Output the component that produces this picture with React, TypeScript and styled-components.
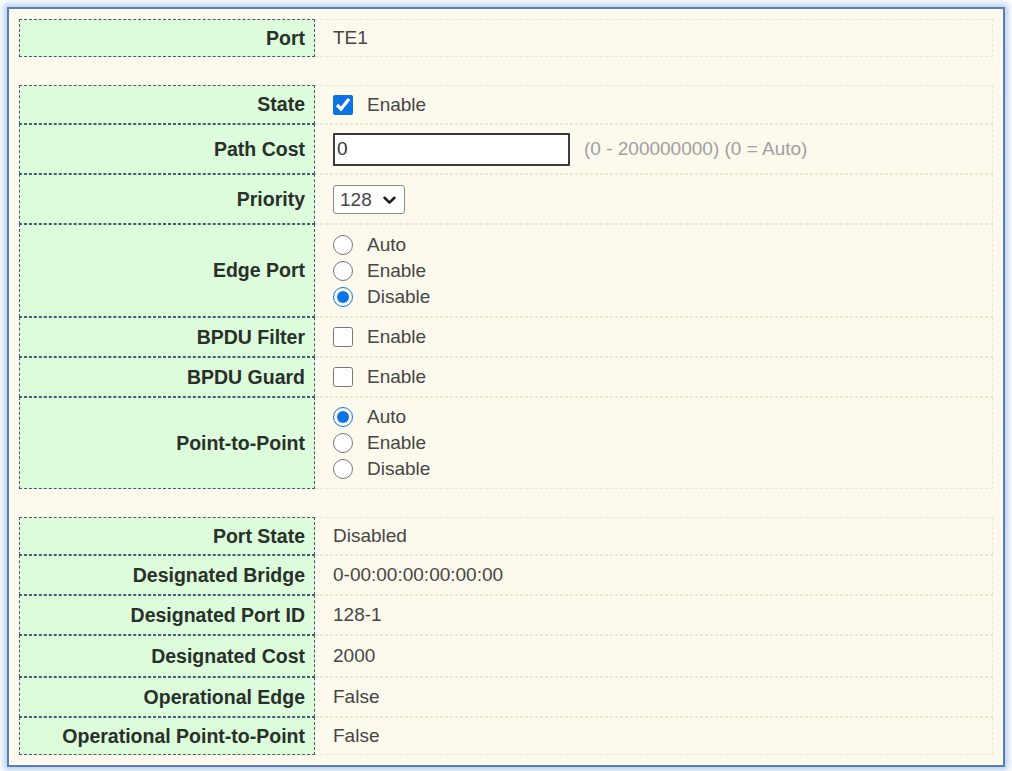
import styled, { createGlobalStyle } from "styled-components";

// page defaults
const GlobalStyle = createGlobalStyle`
  html, body {
    margin: 0;
    padding: 0;
    background: #ffffff;
  }
  body {
    font-family: "Liberation Sans", Arial, sans-serif;
  }
`;

type Line = { label: string; value: string };

const STATUS: Line[] = [
    { label: "Port State", value: "Disabled" },
    { label: "Designated Bridge", value: "0-00:00:00:00:00:00" },
    { label: "Designated Port ID", value: "128-1" },
    { label: "Designated Cost", value: "2000" },
    { label: "Operational Edge", value: "False" },
    { label: "Operational Point-to-Point", value: "False" },
];
const STATUS_HEIGHTS = [38, 40, 40, 42, 40, 38];

const RadioGroup = ({ name, options, checked }: { name: string; options: string[]; checked: string }) => (
    <RadioList>
        {options.map((opt) => (
            <Choice key={opt}>
                <Radio type="radio" name={name} defaultChecked={opt === checked} />
                {opt}
            </Choice>
        ))}
    </RadioList>
);

// STP port settings form
const App = () => {
    return (
        <>
            <GlobalStyle />
            <Page>
                <Frame>
                    <Table>
                        <colgroup>
                            <LabelCol />
                            <col />
                        </colgroup>
                        <tbody>
                            <Row $h={38}>
                                <Label>Port</Label>
                                <Value>TE1</Value>
                            </Row>
                        </tbody>
                    </Table>

                    <Table>
                        <colgroup>
                            <LabelCol />
                            <col />
                        </colgroup>
                        <tbody>
                            <Row $h={39}>
                                <Label>State</Label>
                                <Value>
                                    <Choice>
                                        <Check type="checkbox" defaultChecked />
                                        Enable
                                    </Choice>
                                </Value>
                            </Row>
                            <Row $h={50}>
                                <Label>Path Cost</Label>
                                <Value>
                                    <InputLine>
                                        <TextInput defaultValue="0" />
                                        <Hint>(0 - 200000000) (0 = Auto)</Hint>
                                    </InputLine>
                                </Value>
                            </Row>
                            <Row $h={50}>
                                <Label>Priority</Label>
                                <Value>
                                    <SelectBox>
                                        <Select defaultValue="128">
                                            <option>0</option>
                                            <option>16</option>
                                            <option>32</option>
                                            <option>64</option>
                                            <option>128</option>
                                            <option>240</option>
                                        </Select>
                                        <Chevron viewBox="0 0 12 8">
                                            <path d="M1.5 1.5 L6 6 L10.5 1.5" />
                                        </Chevron>
                                    </SelectBox>
                                </Value>
                            </Row>
                            <Row $h={93}>
                                <Label>Edge Port</Label>
                                <Value>
                                    <RadioGroup name="edge" options={["Auto", "Enable", "Disable"]} checked="Disable" />
                                </Value>
                            </Row>
                            <Row $h={40}>
                                <Label>BPDU Filter</Label>
                                <Value>
                                    <Choice>
                                        <Check type="checkbox" />
                                        Enable
                                    </Choice>
                                </Value>
                            </Row>
                            <Row $h={40}>
                                <Label>BPDU Guard</Label>
                                <Value>
                                    <Choice>
                                        <Check type="checkbox" />
                                        Enable
                                    </Choice>
                                </Value>
                            </Row>
                            <Row $h={92}>
                                <Label>Point-to-Point</Label>
                                <Value>
                                    <RadioGroup name="p2p" options={["Auto", "Enable", "Disable"]} checked="Auto" />
                                </Value>
                            </Row>
                        </tbody>
                    </Table>

                    <Table>
                        <colgroup>
                            <LabelCol />
                            <col />
                        </colgroup>
                        <tbody>
                            {STATUS.map((line, i) => (
                                <Row key={line.label} $h={STATUS_HEIGHTS[i]}>
                                    <Label>{line.label}</Label>
                                    <Value>{line.value}</Value>
                                </Row>
                            ))}
                        </tbody>
                    </Table>
                </Frame>
            </Page>
        </>
    );
};

export default App;

// styles
const Page = styled.div`
    width: 1012px;
    box-sizing: border-box;
    padding: 7px;
`;

const Frame = styled.div`
    width: 998px;
    height: 760px;
    box-sizing: border-box;
    border: 2px solid #5a7fb2;
    box-shadow: 0 0 7px 3px #b2cdee, inset 0 0 0 2px #fffefa;
    background: #fdf9ec;
    padding: 10px;
    display: flex;
    flex-direction: column;
    gap: 28px;
`;

const Table = styled.table`
    width: 100%;
    table-layout: fixed;
    border-collapse: separate;
    border-spacing: 0;
    font-size: 19px;
`;

const LabelCol = styled.col`
    width: 296px;
`;

const Row = styled.tr<{ $h: number }>`
    height: ${(p) => p.$h}px;
`;

const Label = styled.th`
    background: #dcfcdc;
    border: 1px dashed #3e6273;
    text-align: right;
    font-size: 19.5px;
    font-weight: bold;
    color: #29302a;
    padding: 0 9px 0 0;
    white-space: nowrap;
`;

const Value = styled.td`
    border-top: 1px dashed #ece7d3;
    border-bottom: 1px dashed #ece7d3;
    border-right: 1px dashed #ece7d3;
    padding: 0 0 0 18px;
    color: #464646;
`;

const Choice = styled.label`
    display: flex;
    align-items: center;
    gap: 14px;
    height: 26px;
    color: #464646;
`;

const Check = styled.input`
    width: 20px;
    height: 20px;
    margin: 0;
    accent-color: #0b73e6;
`;

const Radio = styled.input`
    width: 20px;
    height: 20px;
    margin: 0;
    accent-color: #0b73e6;
`;

const RadioList = styled.div`
    display: flex;
    flex-direction: column;
`;

const InputLine = styled.div`
    display: flex;
    align-items: center;
    gap: 14px;
`;

const TextInput = styled.input`
    width: 237px;
    height: 33px;
    box-sizing: border-box;
    border: 2px solid #3a3a3a;
    border-radius: 1px;
    padding: 0 2px;
    font: 19px "Liberation Sans", Arial, sans-serif;
    color: #333;
    background: #fff;
`;

const Hint = styled.span`
    color: #a0a0a0;
    font-size: 19px;
`;

const SelectBox = styled.div`
    position: relative;
    display: inline-flex;
    width: 72px;
    height: 29px;
`;

const Select = styled.select`
    appearance: none;
    width: 100%;
    height: 100%;
    box-sizing: border-box;
    border: 1px solid #8a8a8a;
    border-radius: 3px;
    background: #fff;
    padding: 0 0 0 6px;
    font: 19px "Liberation Sans", Arial, sans-serif;
    color: #464646;
`;

const Chevron = styled.svg`
    position: absolute;
    right: 9px;
    top: 11px;
    width: 13px;
    height: 9px;
    fill: none;
    stroke: #1f1f1f;
    stroke-width: 2.4;
    stroke-linecap: round;
    stroke-linejoin: round;
    pointer-events: none;
`;
